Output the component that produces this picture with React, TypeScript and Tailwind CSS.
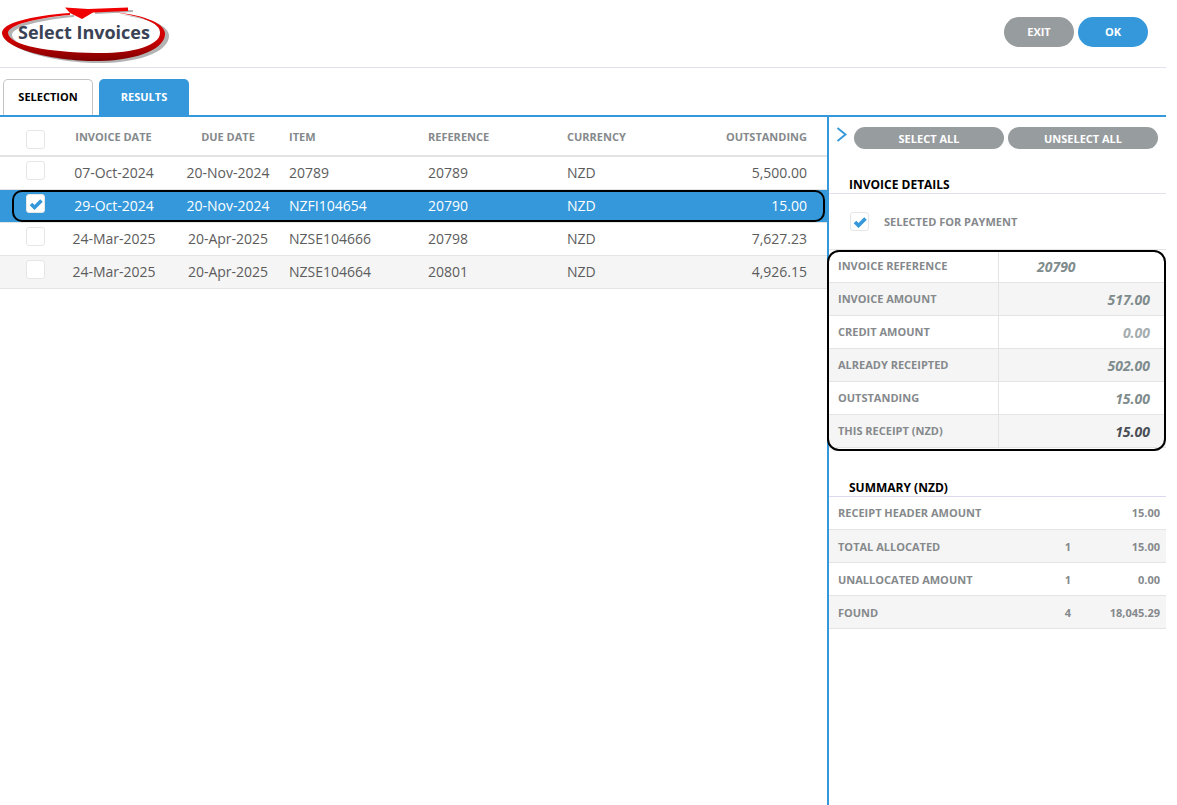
import React from 'react';

const font = "font-['Open_Sans',sans-serif]";

const invoices = [
  { checked: false, date: '07-Oct-2024', due: '20-Nov-2024', item: '20789', ref: '20789', cur: 'NZD', amount: '5,500.00' },
  { checked: true, date: '29-Oct-2024', due: '20-Nov-2024', item: 'NZFI104654', ref: '20790', cur: 'NZD', amount: '15.00' },
  { checked: false, date: '24-Mar-2025', due: '20-Apr-2025', item: 'NZSE104666', ref: '20798', cur: 'NZD', amount: '7,627.23' },
  { checked: false, date: '24-Mar-2025', due: '20-Apr-2025', item: 'NZSE104664', ref: '20801', cur: 'NZD', amount: '4,926.15' },
];

const details = [
  { label: 'INVOICE REFERENCE', value: '20790', cls: 'text-[#7f8c8d]', left: true },
  { label: 'INVOICE AMOUNT', value: '517.00', cls: 'text-[#7f8c8d]' },
  { label: 'CREDIT AMOUNT', value: '0.00', cls: 'text-[#a5adb0]' },
  { label: 'ALREADY RECEIPTED', value: '502.00', cls: 'text-[#7f8c8d]' },
  { label: 'OUTSTANDING', value: '15.00', cls: 'text-[#7f8c8d]' },
  { label: 'THIS RECEIPT (NZD)', value: '15.00', cls: 'text-[#4a4f55]' },
];

const summary = [
  { label: 'RECEIPT HEADER AMOUNT', count: '', value: '15.00' },
  { label: 'TOTAL ALLOCATED', count: '1', value: '15.00' },
  { label: 'UNALLOCATED AMOUNT', count: '1', value: '0.00' },
  { label: 'FOUND', count: '4', value: '18,045.29' },
];

const Check = ({ checked }: { checked: boolean }) => (
  <div className="w-[19px] h-[19px] rounded-[3px] border border-[#e6e6e6] bg-white flex items-center justify-center">
    {checked && (
      <svg width="14" height="12" viewBox="0 0 14 12">
        <path d="M2 6 L5.5 9.5 L12.5 2.5" fill="none" stroke="#3498db" strokeWidth="3.6" />
      </svg>
    )}
  </div>
);

const ringPath =
  'M70 13 C30 16 2 23 2 33 C3 50 60 62 100 61 C140 60 166 48 165 33 C164 22 140 14 110 12 C140 15 161 23 160 33 C160 46 130 54 95 53 C50 52 9 46 8 33 C8 25 35 18 70 15 Z';

const RedCircle = () => (
  <svg className="absolute left-0 top-0 pointer-events-none" width="180" height="68" viewBox="0 0 180 68">
    <defs>
      <linearGradient id="ring" x1="0" y1="0" x2="0" y2="1">
        <stop offset="0" stopColor="#f00000" />
        <stop offset="0.6" stopColor="#c80000" />
        <stop offset="1" stopColor="#7d0000" />
      </linearGradient>
    </defs>
    <path d={ringPath} fill="#b3b3b3" transform="translate(4 2)" />
    <path d="M128 10 L133 10 L133 12 L95 14 L95 12 Z" fill="#b3b3b3" />
    <path d={ringPath} fill="url(#ring)" />
    <path d="M65 7.5 L88 9 L128 7.5 L128 11 L93 12.5 L82 19 L70 13 Z" fill="#f00000" />
  </svg>
);

export default function App() {
  return (
    <div className={`${font} w-[1177px] h-[805px] bg-white flex flex-col overflow-hidden relative`}>
      {/* header */}
      <div className="w-[1166px] h-[68px] shrink-0 border-b border-[#e2e0ee] flex items-center justify-between pl-[18px] pr-[18px] pb-[3px] relative">
        <RedCircle />
        <h1 className="relative text-[18px] font-bold text-[#3a4256]">Select Invoices</h1>
        <div className="flex gap-[4px]">
          <button className="w-[70px] h-[30px] rounded-full bg-[#979c9f] text-white text-[11px] font-bold">EXIT</button>
          <button className="w-[70px] h-[30px] rounded-full bg-[#3498db] text-white text-[11px] font-bold">OK</button>
        </div>
      </div>

      {/* tabs */}
      <div className="w-[1166px] h-[49px] shrink-0 border-b-2 border-[#3498db] flex items-end gap-[6px] pl-[3px]">
        <div className="w-[90px] h-[36px] rounded-t-[5px] border border-b-0 border-[#c4c4c4] flex items-center justify-center text-[11px] font-bold text-black">SELECTION</div>
        <div className="w-[90px] h-[36px] rounded-t-[5px] bg-[#3498db] flex items-center justify-center text-[11px] font-bold text-white">RESULTS</div>
      </div>

      <div className="flex flex-1 w-[1166px] min-h-0">
        {/* invoice list */}
        <div className="w-[827px] shrink-0 relative">
          <div className="grid grid-cols-[72px_84px_133px_139px_139px_1fr] items-center h-[40px] pr-[20px] pt-[2px] border-b-2 border-[#e4e4e4] text-[11px] font-bold text-[#85898c]">
            <div className="pl-[26px] pt-[4px]"><Check checked={false} /></div>
            <div className="text-center pr-[1px]">INVOICE DATE</div>
            <div className="text-center pl-[11px]">DUE DATE</div>
            <div>ITEM</div>
            <div>REFERENCE</div>
            <div className="grid grid-cols-[1fr_1fr]"><span>CURRENCY</span><span className="text-right">OUTSTANDING</span></div>
          </div>
          {invoices.map((inv, i) => (
            <div
              key={inv.ref}
              className={`grid grid-cols-[72px_84px_133px_139px_139px_1fr] items-center h-[33px] pr-[20px] pb-[2px] text-[14px] border-b border-[#e4e4e4] ${
                inv.checked ? 'bg-[#3498db] text-white' : i === 3 ? 'bg-[#f5f5f5] text-[#5c5c5c]' : 'bg-white text-[#5c5c5c]'
              }`}
            >
              <div className="pl-[26px] -mt-[3px]"><Check checked={inv.checked} /></div>
              <div className="text-center whitespace-nowrap">{inv.date}</div>
              <div className="text-center pl-[11px] whitespace-nowrap">{inv.due}</div>
              <div>{inv.item}</div>
              <div>{inv.ref}</div>
              <div className="grid grid-cols-[1fr_1fr]"><span>{inv.cur}</span><span className="text-right">{inv.amount}</span></div>
            </div>
          ))}
          <div className="absolute left-[12px] top-[73px] w-[813px] h-[32px] rounded-[10px] border-2 border-black pointer-events-none" />
        </div>

        {/* right panel */}
        <div className="flex-1 border-l-2 border-[#3498db] flex flex-col">
          <div className="flex items-start h-[32px] pl-[6px] pt-[10px]">
            <svg className="mt-[-1px]" width="12" height="18" viewBox="0 0 12 18">
              <path d="M2.5 2 L10.5 8.5 L2.5 15" fill="none" stroke="#3498db" strokeWidth="1.9" />
            </svg>
            <div className="flex gap-[4px] ml-[7px]">
              <button className="w-[150px] h-[22px] pt-[2px] rounded-full bg-[#979c9f] text-white text-[11px] font-bold">SELECT ALL</button>
              <button className="w-[150px] h-[22px] pt-[2px] rounded-full bg-[#979c9f] text-white text-[11px] font-bold">UNSELECT ALL</button>
            </div>
          </div>
          <div className="h-[45px] border-b border-[#e2e0ee] flex items-end pl-[20px] text-[12px] font-bold text-black leading-[17px] shrink-0">INVOICE DETAILS</div>
          <div className="h-[56px] border-b border-[#e4e4e4] flex items-center pl-[21px] gap-[15px] shrink-0">
            <Check checked />
            <span className="text-[11px] font-bold text-[#85898c] pt-[2px]">SELECTED FOR PAYMENT</span>
          </div>
          <div className="relative shrink-0">
            {details.map((d, i) => (
              <div key={d.label} className={`flex h-[33px] border-b border-[#e4e4e4] ${i % 2 ? 'bg-[#f5f5f5]' : 'bg-white'}`}>
                <div className="w-[170px] border-r border-[#e4e4e4] flex items-center pl-[9px] text-[11px] font-bold text-[#85898c]">{d.label}</div>
                <div className={`flex-1 flex items-center text-[14px] font-bold italic ${d.cls} ${d.left ? 'pl-[38px]' : 'justify-end pr-[16px]'}`}>{d.value}</div>
              </div>
            ))}
            <div className="absolute -left-[2px] top-0 w-[339px] h-[201px] rounded-[12px] border-2 border-black pointer-events-none" />
          </div>
          <div className="h-[49px] border-b border-[#dcdaf0] flex items-end pl-[20px] text-[12px] font-bold text-black leading-[17px] shrink-0">SUMMARY (NZD)</div>
          {summary.map((s, i) => (
            <div key={s.label} className={`flex items-center h-[33px] border-b border-[#e4e4e4] text-[11px] font-bold text-[#85898c] ${i > 0 ? 'pt-[2px]' : ''} ${i % 2 ? 'bg-[#f5f5f5]' : 'bg-white'}`}>
              <div className="flex-1 pl-[9px]">{s.label}</div>
              <div className="w-[20px] text-right">{s.count}</div>
              <div className="w-[95px] text-right pr-[6px]">{s.value}</div>
            </div>
          ))}
        </div>
      </div>
    </div>
  );
}
